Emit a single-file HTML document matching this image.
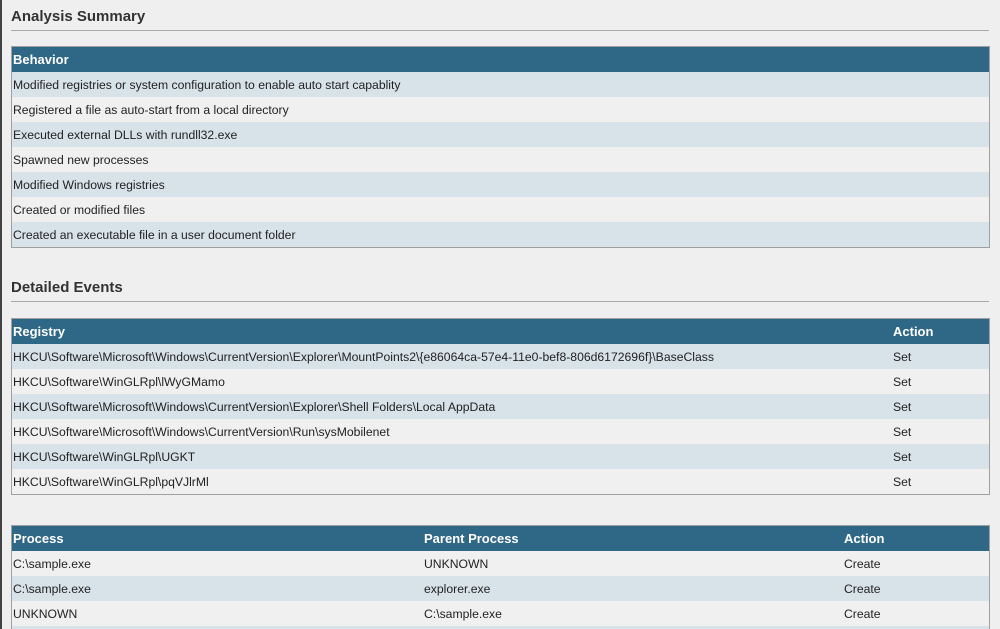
<!DOCTYPE html><html><head><style>
html,body{margin:0;width:1000px;height:629px;overflow:hidden}
body{background:#efefef;font-family:"Liberation Sans",Arial,sans-serif;color:#222;position:relative}
.lb{position:absolute;left:0;top:0;width:2px;height:629px;background:#444}
h2{position:absolute;left:11px;margin:0;font-size:15px;font-weight:bold;color:#333}
.hr{position:absolute;left:11px;width:978px;height:1px;background:#aaa}
table{position:absolute;left:11px;width:979px;border-collapse:collapse;border:1px solid #a0a0a0;font-size:12.2px}
td,th{height:25px;padding:0 0 0 1px;text-align:left;vertical-align:middle}
th{background:#2f6886;color:#fff;font-weight:bold;font-size:13px;height:25px}
tr:nth-child(even) td{background:#d8e2e9}
tr:nth-child(odd) td{background:#f0f0f0}
table.alt tr:nth-child(even) td{background:#f0f0f0}
table.alt tr:nth-child(odd) td{background:#d8e2e9}
</style></head><body>
<div class="lb"></div>
<h2 style="top:8px">Analysis Summary</h2>
<div class="hr" style="top:30px"></div>
<table style="top:46px"><tr><th>Behavior</th></tr>
<tr><td>Modified registries or system configuration to enable auto start capablity</td></tr>
<tr><td>Registered a file as auto-start from a local directory</td></tr>
<tr><td>Executed external DLLs with rundll32.exe</td></tr>
<tr><td>Spawned new processes</td></tr>
<tr><td>Modified Windows registries</td></tr>
<tr><td>Created or modified files</td></tr>
<tr><td>Created an executable file in a user document folder</td></tr>
</table>
<h2 style="top:279px">Detailed Events</h2>
<div class="hr" style="top:301px"></div>
<table style="top:318px"><tr><th style="width:879px">Registry</th><th>Action</th></tr>
<tr><td>HKCU\Software\Microsoft\Windows\CurrentVersion\Explorer\MountPoints2\{e86064ca-57e4-11e0-bef8-806d6172696f}\BaseClass</td><td>Set</td></tr>
<tr><td>HKCU\Software\WinGLRpl\lWyGMamo</td><td>Set</td></tr>
<tr><td>HKCU\Software\Microsoft\Windows\CurrentVersion\Explorer\Shell Folders\Local AppData</td><td>Set</td></tr>
<tr><td>HKCU\Software\Microsoft\Windows\CurrentVersion\Run\sysMobilenet</td><td>Set</td></tr>
<tr><td>HKCU\Software\WinGLRpl\UGKT</td><td>Set</td></tr>
<tr><td>HKCU\Software\WinGLRpl\pqVJlrMl</td><td>Set</td></tr>
</table>
<table class="alt" style="top:525px"><tr><th style="width:410px">Process</th><th style="width:419px">Parent Process</th><th>Action</th></tr>
<tr><td>C:\sample.exe</td><td>UNKNOWN</td><td>Create</td></tr>
<tr><td>C:\sample.exe</td><td>explorer.exe</td><td>Create</td></tr>
<tr><td>UNKNOWN</td><td>C:\sample.exe</td><td>Create</td></tr>
<tr><td>&nbsp;</td><td></td><td></td></tr>
</table>
</body></html>
